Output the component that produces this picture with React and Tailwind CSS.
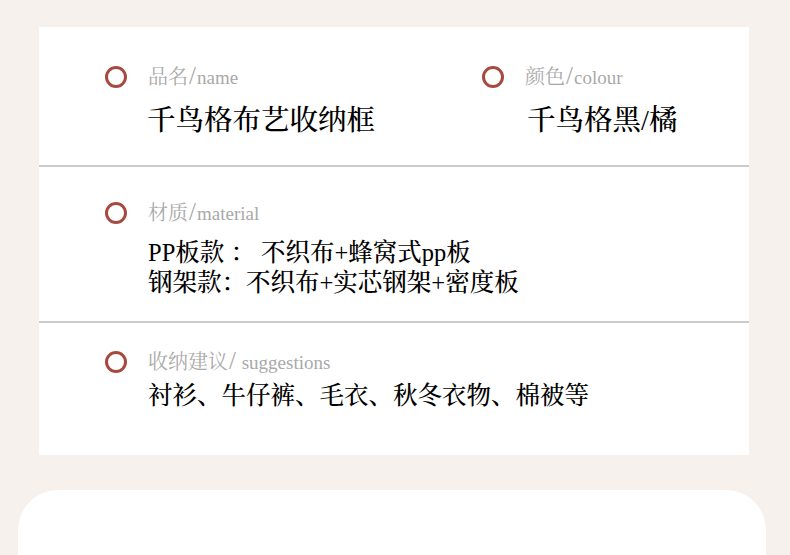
import React from 'react';

const serif = { fontFamily: '"Liberation Serif", "Noto Serif CJK SC", "Noto Sans CJK SC", serif' };

const Label = ({ zh, en }) => (
  <div className="flex items-center gap-[21px] h-[24px]">
    <span className="w-[22px] h-[22px] rounded-full border-[3.5px] border-[#a64a3f] shrink-0" />
    <span className="text-[20px] leading-[24px] text-[#a9a9a9] whitespace-nowrap">
      {zh}
      <span className="text-[25px] px-[1px]">/</span>
      <span className="text-[19px]">{en}</span>
    </span>
  </div>
);

export default function App() {
  return (
    <div className="w-[790px] h-[555px] overflow-hidden bg-[#f6f1ec] pt-[27px]" style={serif}>
      <div className="ml-[39px] w-[710px] bg-white">
        {/* name + colour */}
        <div className="border-b-2 border-[#cbcbcb] pl-[66px] pt-[38px] pb-[26px] grid grid-cols-[377px_1fr]">
          <div>
            <Label zh="品名" en="name" />
            <p className="mt-[14px] pl-[42px] text-[28.5px] leading-[36px] font-medium text-black">千鸟格布艺收纳框</p>
          </div>
          <div>
            <Label zh="颜色" en="colour" />
            <p className="mt-[14px] pl-[45px] text-[28.5px] leading-[36px] font-medium text-black">千鸟格黑/橘</p>
          </div>
        </div>

        {/* material */}
        <div className="border-b-2 border-[#cbcbcb] pl-[66px] pt-[34px] pb-[23px]">
          <Label zh="材质" en="material" />
          <div className="mt-[13px] pl-[43px] text-[24.5px] leading-[30px] font-medium text-black whitespace-nowrap">
            <p>PP板款 ： 不织布+蜂窝式pp板</p>
            <p>钢架款：不织布+实芯钢架+密度板</p>
          </div>
        </div>

        {/* suggestions */}
        <div className="pl-[66px] pt-[27px] pb-[44px]">
          <Label zh="收纳建议" en=" suggestions" />
          <p className="mt-[7px] pl-[43px] text-[24.5px] leading-[30px] font-medium text-black whitespace-nowrap">
            衬衫、牛仔裤、毛衣、秋冬衣物、棉被等
          </p>
        </div>
      </div>

      <div className="mt-[35px] ml-[18px] w-[748px] h-[120px] rounded-t-[40px] bg-white" />
    </div>
  );
}
